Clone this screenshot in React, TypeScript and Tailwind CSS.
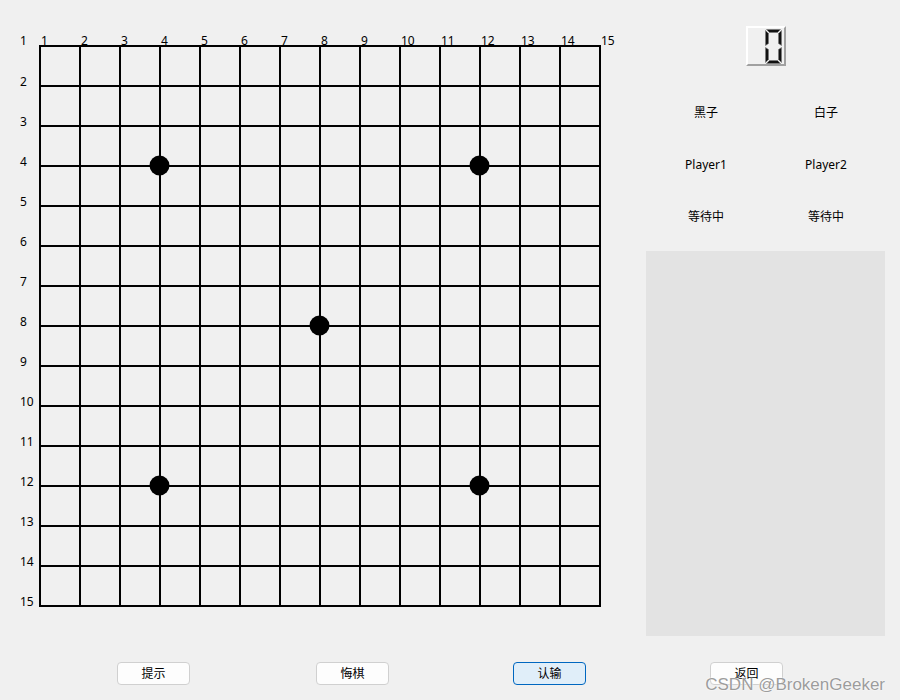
import React from 'react';

const FONT = "font-['Noto_Sans','Noto_Sans_CJK_SC',sans-serif]";
const N = 15;
const STEP = 40;
const stars: [number, number][] = [
  [4, 4],
  [12, 4],
  [8, 8],
  [4, 12],
  [12, 12],
];

const Board: React.FC = () => {
  const size = STEP * (N - 1) + 4;
  const lines = Array.from({ length: N }, (_, i) => 2 + i * STEP);
  return (
    <svg width={size} height={size} className="block">
      {lines.map((p) => (
        <line key={'v' + p} x1={p} y1={1} x2={p} y2={size - 1} stroke="#000" strokeWidth={2} />
      ))}
      {lines.map((p) => (
        <line key={'h' + p} x1={1} y1={p} x2={size - 1} y2={p} stroke="#000" strokeWidth={2} />
      ))}
      {stars.map(([c, r]) => (
        <circle key={`${c}-${r}`} cx={2 + (c - 1) * STEP - 0.5} cy={2 + (r - 1) * STEP - 0.5} r={10} fill="#000" />
      ))}
    </svg>
  );
};

const LcdZero: React.FC = () => (
  <svg width="17" height="35" viewBox="0 0 17 35" className="block">
    <g fill="#111" stroke="#777" strokeWidth="0.6">
      <polygon points="1.5,0.5 15.5,0.5 12.5,3.5 4.5,3.5" />
      <polygon points="0.5,1.5 3.5,4.5 3.5,14.5 0.5,16.5" />
      <polygon points="16.5,1.5 16.5,16.5 13.5,14.5 13.5,4.5" />
      <polygon points="0.5,18.5 3.5,20.5 3.5,30.5 0.5,33.5" />
      <polygon points="16.5,18.5 16.5,33.5 13.5,30.5 13.5,20.5" />
      <polygon points="1.5,34.5 4.5,31.5 12.5,31.5 15.5,34.5" />
    </g>
  </svg>
);

const Btn: React.FC<{ label: string; primary?: boolean; className?: string }> = ({ label, primary, className }) => (
  <button
    className={
      'w-[73px] h-[23px] rounded-[4px] border text-[12px] leading-none text-black flex items-center justify-center ' +
      (primary ? 'border-[#0067c0] bg-[#e0eef9] ' : 'border-[#d0d0d0] bg-[#fdfdfd] ') +
      (className ?? '')
    }
  >
    {label}
  </button>
);

export default function App() {
  const nums = Array.from({ length: N }, (_, i) => i + 1);
  return (
    <div className={`w-[900px] h-[700px] bg-[#f0f0f0] relative overflow-hidden text-black ${FONT}`}>
      <div className="flex">
        {/* board area */}
        <div className="w-[646px] pt-[30px]">
          <div className="flex items-end h-[14px] text-[12px] leading-[7px]">
            <div className="w-[40px] pl-[20px]">1</div>
            {nums.map((n) => (
              <div key={n} className={n === N ? 'pl-[1px]' : 'w-[40px] pl-[1px]'}>
                {n}
              </div>
            ))}
          </div>
          <div className="flex">
            <div className="w-[38px] pl-[20px] pt-[4px] text-[12px] leading-[12px]">
              {nums.slice(1).map((n) => (
                <div key={n} className="h-[40px] flex items-end">
                  {n}
                </div>
              ))}
            </div>
            <Board />
          </div>
        </div>

        {/* side panel */}
        <div className="w-[240px] pt-[26px] flex flex-col">
          <div className="mx-auto w-[40px] h-[40px] border-2 border-t-white border-l-white border-r-[#a0a0a0] border-b-[#a0a0a0] bg-[#f0f0f0] flex items-center justify-end pr-[2px]">
            <LcdZero />
          </div>
          <div className="mt-[21px] grid grid-cols-2 text-[12px] leading-none">
            <div className="h-[52px] flex items-center justify-center">黑子</div>
            <div className="h-[52px] flex items-center justify-center">白子</div>
            <div className="h-[52px] flex items-center justify-center">Player1</div>
            <div className="h-[52px] flex items-center justify-center">Player2</div>
            <div className="h-[52px] flex items-center justify-center">等待中</div>
            <div className="h-[52px] flex items-center justify-center">等待中</div>
          </div>
          <div className="mt-[8px] w-[239px] h-[385px] bg-[#e3e3e3]" />
        </div>
      </div>

      <div className="flex mt-[26px]">
        <Btn label="提示" className="ml-[117px]" />
        <Btn label="悔棋" className="ml-[126px]" />
        <Btn label="认输" primary className="ml-[124px]" />
        <Btn label="返回" className="ml-[124px]" />
      </div>

      <div className="absolute right-[15px] bottom-[7px] text-[17px] leading-none text-[#9c9c9c] font-['Liberation_Sans',sans-serif] [text-shadow:0_0_2px_#fff,0_0_1px_#fff]">
        CSDN @BrokenGeeker
      </div>
    </div>
  );
}
